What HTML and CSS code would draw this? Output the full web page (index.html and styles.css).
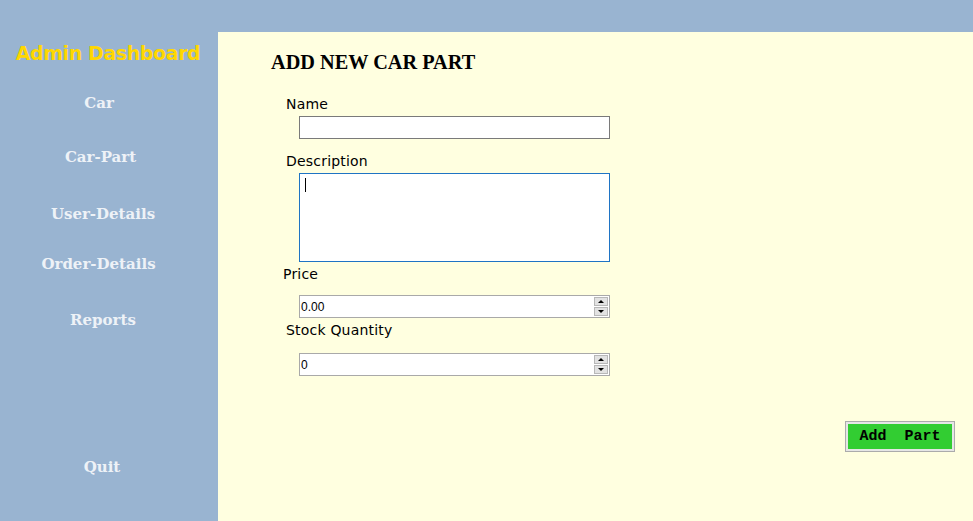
FILE: index.html
```html
<!DOCTYPE html>
<html>
<head>
<meta charset="utf-8">
<title>Admin Dashboard</title>
<link rel="stylesheet" href="styles.css">
</head>
<body>
<div class="app">
  <div class="topbar"></div>
  <div class="body">
    <aside class="sidebar">
      <div class="brand">Admin Dashboard</div>
      <nav class="nav">
        <div class="nav-item item-car">Car</div>
        <div class="nav-item item-part">Car-Part</div>
        <div class="nav-item item-user">User-Details</div>
        <div class="nav-item item-order">Order-Details</div>
        <div class="nav-item item-reports">Reports</div>
        <div class="nav-item item-quit">Quit</div>
      </nav>
    </aside>
    <main class="main">
      <h1 class="title">ADD NEW CAR PART</h1>
      <div class="form">
        <label class="label label-name">Name</label>
        <input class="field field-name" type="text">
        <label class="label label-desc">Description</label>
        <div class="field textarea"><span class="caret"></span></div>
        <label class="label label-price">Price</label>
        <div class="field spinner spinner-price">
          <span class="spin-value">0.00</span>
          <span class="spin-buttons">
            <span class="spin-btn"><span class="arrow-up"></span></span>
            <span class="spin-btn"><span class="arrow-down"></span></span>
          </span>
        </div>
        <label class="label label-stock">Stock Quantity</label>
        <div class="field spinner spinner-stock">
          <span class="spin-value">0</span>
          <span class="spin-buttons">
            <span class="spin-btn"><span class="arrow-up"></span></span>
            <span class="spin-btn"><span class="arrow-down"></span></span>
          </span>
        </div>
      </div>
      <div class="actions">
        <button class="add-btn" type="button">Add&nbsp;&nbsp;Part</button>
      </div>
    </main>
  </div>
</div>
</body>
</html>
```
FILE: styles.css
```css
* { box-sizing: border-box; }
html, body {
  margin: 0;
  padding: 0;
  width: 973px;
  height: 521px;
  overflow: hidden;
  background: #99b4d1;
}
.app {
  display: flex;
  flex-direction: column;
  width: 973px;
  height: 521px;
}
.topbar {
  height: 32px;
  background: #99b4d1;
}
.body {
  flex: 1;
  display: flex;
}
.sidebar {
  width: 218px;
  background: #99b4d1;
  display: flex;
  flex-direction: column;
}
.brand {
  margin-top: 10px;
  height: 22px;
  line-height: 22px;
  text-align: center;
  padding-right: 2px;
  font-family: "DejaVu Sans", Verdana, sans-serif;
  font-weight: bold;
  font-size: 19px;
  letter-spacing: -0.4px;
  color: #ffd700;
}
.nav {
  display: flex;
  flex-direction: column;
}
.nav-item {
  width: 200px;
  height: 20px;
  line-height: 20px;
  text-align: center;
  font-family: "DejaVu Serif", "Liberation Serif", serif;
  font-weight: bold;
  font-size: 15px;
  color: #eef2f7;
}
.item-car { margin-top: 29px; padding-right: 2px; }
.item-part { margin-top: 34px; padding-left: 1px; }
.item-user { margin-top: 37px; padding-left: 6px; }
.item-order { margin-top: 30px; padding-right: 3px; }
.item-reports { margin-top: 36px; padding-left: 6px; }
.item-quit { margin-top: 127px; padding-left: 4px; }

.main {
  flex: 1;
  background: #ffffe0;
  display: flex;
  flex-direction: column;
}
.title {
  margin: 18px 0 0 53px;
  height: 24px;
  line-height: 24px;
  font-family: "Liberation Serif", "Times New Roman", serif;
  font-weight: bold;
  font-size: 20.3px;
  color: #000;
}
.form {
  display: flex;
  flex-direction: column;
  align-items: flex-start;
  margin-top: 21px;
}
.label {
  height: 18px;
  line-height: 18px;
  margin-left: 68px;
  font-family: "DejaVu Sans", Verdana, sans-serif;
  font-size: 14px;
  letter-spacing: 0.2px;
  color: #000;
}
.label-price { margin-left: 65px; }
.field {
  margin-left: 81px;
  width: 311px;
  background: #fff;
}
.field-name {
  margin-top: 3px;
  height: 23px;
  border: 1px solid #7a7a7a;
  padding: 0;
  outline: none;
}
.label-desc { margin-top: 13px; }
.textarea {
  margin-top: 3px;
  height: 89px;
  border: 1px solid #1f74c4;
  padding: 4px 0 0 5px;
}
.caret {
  display: block;
  width: 1px;
  height: 14px;
  background: #000;
}
.label-price { margin-top: 3px; }
.spinner {
  height: 23px;
  border: 1px solid #a9a9a9;
  display: flex;
  align-items: center;
  justify-content: space-between;
  padding: 0 1px 0 1px;
}
.spinner-price { margin-top: 12px; }
.label-stock { margin-top: 3px; }
.spinner-stock { margin-top: 14px; }
.spin-value {
  font-family: "Liberation Sans", Arial, sans-serif;
  font-size: 12px;
  color: #000;
}
.spin-buttons {
  display: flex;
  flex-direction: column;
  gap: 1px;
  width: 14px;
}
.spin-btn {
  height: 9px;
  background: #e2e2e2;
  border: 1px solid #b8b8b8;
  display: flex;
  align-items: center;
  justify-content: center;
}
.arrow-up {
  width: 0;
  height: 0;
  border-left: 3px solid transparent;
  border-right: 3px solid transparent;
  border-bottom: 3px solid #000;
}
.arrow-down {
  width: 0;
  height: 0;
  border-left: 3px solid transparent;
  border-right: 3px solid transparent;
  border-top: 3px solid #000;
}
.actions {
  display: flex;
  justify-content: flex-end;
  margin-top: 45px;
  padding-right: 18px;
}
.add-btn {
  width: 110px;
  height: 31px;
  border: 1px solid #ababab;
  outline: 2px solid #e6e6e6;
  outline-offset: -3px;
  background: #32cd32;
  margin: 0;
  padding: 0;
  font-family: "Liberation Mono", "Courier New", monospace;
  font-weight: bold;
  font-size: 15px;
  color: #000;
}
```
